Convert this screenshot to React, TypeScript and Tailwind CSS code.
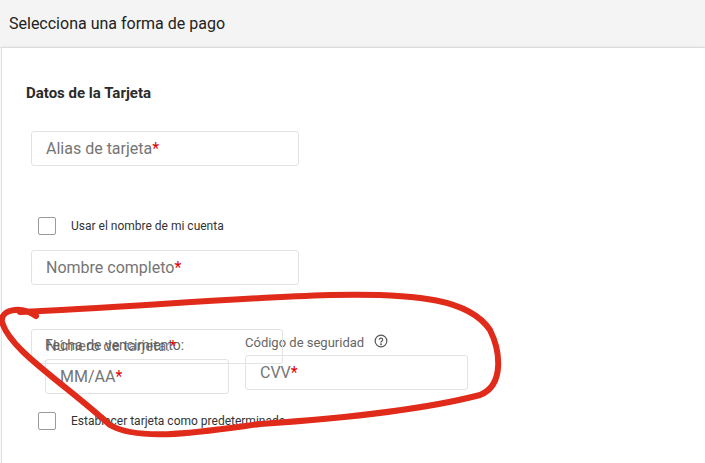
import React from "react";

const Req = () => <span className="text-[#e00000]">*</span>;

const Field = ({ label, className = "" }: { label: React.ReactNode; className?: string }) => (
  <div className={`h-[35px] border border-[#e3e3e3] rounded-[3px] bg-white flex items-center pl-[14px] text-[16px] text-[#757575] ${className}`}>
    {label}
  </div>
);

const Check = ({ label }: { label: string }) => (
  <div className="flex items-center ml-[36px]">
    <div className="w-[18px] h-[18px] border border-[#9a9a9a] rounded-[2px] bg-white" />
    <span className="ml-[15px] text-[12px] text-[#333]">{label}</span>
  </div>
);

export default function App() {
  return (
    <div className="relative w-[705px] h-[463px] overflow-hidden bg-white" style={{ fontFamily: "Roboto, 'Noto Sans', sans-serif" }}>
      <div className="h-[48px] bg-[#f4f4f4] border-b border-[#e6e6e6] flex items-center pl-[9px] text-[16px] text-[#222]">
        Selecciona una forma de pago
      </div>
      <div className="ml-[1px] border-l border-[#e2e2e2] h-full shadow-[0_-1px_3px_rgba(0,0,0,0.08)]">
        <div className="pt-[35px] pl-[24px] text-[15px] font-bold text-[#2b2b2b] leading-[20px]">Datos de la Tarjeta</div>
        <Field className="mt-[28px] ml-[29px] w-[268px]" label={<>Alias de tarjeta<Req /></>} />
        <div className="mt-[51px]"><Check label="Usar el nombre de mi cuenta" /></div>
        <Field className="mt-[15px] ml-[29px] w-[268px]" label={<>Nombre completo<Req /></>} />
        <div className="relative mt-[49px] flex gap-[16px] ml-[43px]">
          <div className="w-[184px]">
            <div className="text-[14px] text-[#666] h-[18px] mt-[2px] leading-[18px]">Fecha de vencimiento:</div>
            <Field className="mt-[5px]" label={<>MM/AA<Req /></>} />
          </div>
          <div className="w-[223px]">
            <div className="text-[13px] text-[#666] h-[18px] leading-[18px] flex items-center">
              Código de seguridad
              <svg className="ml-[10px] -mt-[4px]" width="14" height="14" viewBox="0 0 24 24" fill="none" stroke="#555" strokeWidth="2" strokeLinecap="round">
                <circle cx="12" cy="12" r="10" />
                <path d="M9.1 9a3 3 0 0 1 5.8 1c0 2-3 2.5-3 4" />
                <circle cx="12" cy="17.5" r="0.6" fill="#555" />
              </svg>
            </div>
            <Field className="mt-[3px]" label={<>CVV<Req /></>} />
          </div>
          <div className="absolute -left-[14px] -top-[5px] w-[252px] h-[35px] border border-[#e3e3e3] rounded-[3px] flex items-center pl-[14px] text-[15px] text-[#555]/80">
            Número de tarjeta:<Req />
          </div>
        </div>
        <div className="mt-[18px]"><Check label="Establecer tarjeta como predeterminada" /></div>
      </div>
      <svg className="absolute left-0 top-0 pointer-events-none" width="705" height="463" viewBox="0 0 705 463" fill="none">
        <path d="M36 316 C20 305 0 310 2 322 C10 350 60 380 110 425 C140 442 200 432 260 424 C350 418 430 408 480 395 C505 385 500 350 490 330 C470 300 420 293 330 295 C230 298 120 308 20 312"
          stroke="#e02a1a" strokeWidth="6" strokeLinecap="round" strokeLinejoin="round" />
      </svg>
    </div>
  );
}
